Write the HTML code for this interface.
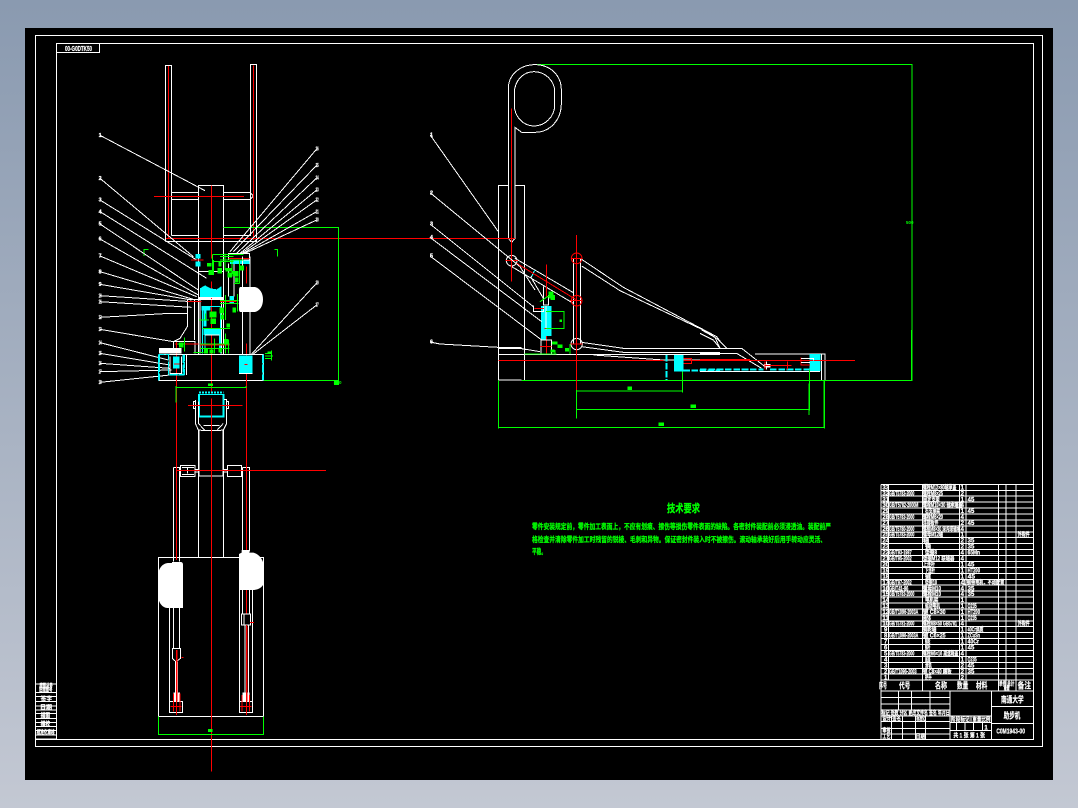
<!DOCTYPE html>
<html><head><meta charset="utf-8"><title>CAD</title>
<style>
html,body{margin:0;padding:0;width:1078px;height:808px;overflow:hidden;background:linear-gradient(180deg,#8a9ab0 0%,#c3c8d3 100%)}
svg{position:absolute;left:0;top:0}
text{font-family:"Liberation Sans","Noto Sans CJK SC",sans-serif;font-weight:bold}
.w{fill:none;stroke:#fff;stroke-width:3}
.r{fill:none;stroke:#f00;stroke-width:3}
.g{fill:none;stroke:#0f0;stroke-width:3}
.c{fill:none;stroke:#0ff;stroke-width:3}
.wt{fill:#fff;stroke:#fff;stroke-width:.7;font-size:18px}
.gt{fill:#0f0;stroke:none;font-size:15px}
.nt{fill:#fff;stroke:#fff;stroke-width:.8;font-size:16px}
.tech{fill:#0f0;stroke:#0f0;stroke-width:.25;font-size:7.5px}
</style></head><body>
<svg width="1078" height="808" viewBox="0 0 1078 808" shape-rendering="crispEdges">
<rect x="25" y="28" width="1028" height="752" fill="#000"/>
<g fill="none" stroke="#fff">
<rect x="35.5" y="35.5" width="1007" height="711"/>
<path d="M56.500 739V43.500H1033.500V739.500H35.500"/>
<path d="M56.500 52.500H99.500V43"/>
</g>
<text x="65" y="51" font-size="7" fill="#fff" stroke="#fff" stroke-width=".2" textLength="27" lengthAdjust="spacingAndGlyphs">00-G0DTK50</text>

<!-- LEFT VIEW TOP -->
<g transform="translate(90,40) scale(.33333)">
<path class="w" d="M226 604V76H245V586M481 586V73H500V604H226M245 458H325M400 458H481L490 468L481 478H400M245 478H325M245 478V586M245 586H325M400 586H481V478"/>
<path class="w" d="M325 695V436H400V695M325 695H400V775H325ZM325 775V945M415 670V770M432 670V770M400 775V945"/>
<path class="r" d="M236 78V595M490 76V600M192 469H462M364 436V655M364 725V1060M228 595H1270"/>
<path class="g" d="M400 562H745V1022H522M162 648V629H176M563 650V629H553M522 1021H745"/>
<rect x="732" y="1022" width="15" height="13" fill="#0f0"/>
<text class="gt" x="731" y="1034">50</text>

<!-- leaders -->
<path class="w" d="M30 286L345 452M30 415L310 650M30 480L320 660M30 515L350 715M30 552L325 750M30 597L325 765M30 648L320 770M30 695L310 778M30 733L305 780M30 767L305 785M30 785L108 790L305 802M30 832L240 820H292M30 868L250 905M30 908L235 960M30 940L240 975M30 970L240 985M30 995L245 990M30 1027L240 1005"/>
<path class="w" d="M680 327L420 635M680 376L430 635M680 414L440 640M680 450L450 640M680 480L455 640M680 515L460 640M680 540L465 640M680 729L485 942M680 795L490 942"/>
<g>
<text class="nt" x="26" y="291">1</text><text class="nt" x="26" y="420">2</text><text class="nt" x="26" y="485">3</text><text class="nt" x="26" y="520">4</text><text class="nt" x="26" y="557">5</text><text class="nt" x="26" y="602">6</text><text class="nt" x="26" y="653">7</text><text class="nt" x="26" y="700">8</text><text class="nt" x="26" y="738">9</text><text class="nt" x="26" y="772" textLength="9" lengthAdjust="spacingAndGlyphs">10</text><text class="nt" x="26" y="790" textLength="9" lengthAdjust="spacingAndGlyphs">11</text><text class="nt" x="26" y="837" textLength="9" lengthAdjust="spacingAndGlyphs">12</text><text class="nt" x="26" y="873" textLength="9" lengthAdjust="spacingAndGlyphs">13</text><text class="nt" x="26" y="913" textLength="9" lengthAdjust="spacingAndGlyphs">14</text><text class="nt" x="26" y="945" textLength="9" lengthAdjust="spacingAndGlyphs">15</text><text class="nt" x="26" y="975" textLength="9" lengthAdjust="spacingAndGlyphs">16</text><text class="nt" x="26" y="1000" textLength="9" lengthAdjust="spacingAndGlyphs">17</text><text class="nt" x="26" y="1032" textLength="9" lengthAdjust="spacingAndGlyphs">18</text>
<text class="nt" x="677" y="332" textLength="9" lengthAdjust="spacingAndGlyphs">26</text><text class="nt" x="677" y="381" textLength="9" lengthAdjust="spacingAndGlyphs">25</text><text class="nt" x="677" y="419" textLength="9" lengthAdjust="spacingAndGlyphs">24</text><text class="nt" x="677" y="455" textLength="9" lengthAdjust="spacingAndGlyphs">23</text><text class="nt" x="677" y="485" textLength="9" lengthAdjust="spacingAndGlyphs">22</text><text class="nt" x="677" y="520" textLength="9" lengthAdjust="spacingAndGlyphs">21</text><text class="nt" x="677" y="545" textLength="9" lengthAdjust="spacingAndGlyphs">20</text><text class="nt" x="677" y="734" textLength="9" lengthAdjust="spacingAndGlyphs">19</text><text class="nt" x="677" y="800" textLength="9" lengthAdjust="spacingAndGlyphs">27</text>
</g>

<!-- center machine -->
<path d="M330 772V745L345 736L362 745L380 748L395 738V772Z" fill="#0ff"/>
<path class="w" d="M325 772H400M308 660H338M326 778H400M415 640H478V660H415Z"/>
<path d="M316 642H331V656H316ZM316 664H331V680H316ZM420 662H478V672H420ZM418 768H432V792H418Z" fill="#0ff"/>
<path class="r" d="M303 660H340M415 655H478M469 680V730M469 910V1080M260 905V1080"/>
<path class="w" d="M458 650V942M480 650V942M292 778V860L270 895L250 905V940M313 778V900M292 778H325M250 905H315V940"/>
<path d="M452 741H495C510 745 519 760 519 778C519 798 510 812 495 816H452C448 816 447 812 447 805V752C447 745 448 741 452 741Z" fill="#fff" shape-rendering="auto"/>
<path class="c" d="M337 800H392M337 800V940M392 800V940M345 870H388M345 885V930M388 885V930"/>
<path d="M340 867H390V885H340ZM335 798H362V812H335ZM340 812H350V860H340Z" fill="#0ff"/>
<path class="w" d="M330 775V940M395 775V940M345 885H388"/>
<path class="r" d="M330 915H418M255 912H325M292 785H335M390 785H440"/>
<path class="g" d="M368 643V705M368 643H460M390 650H430M390 660H460M368 664H430M426 660V702M448 660V730M432 730H448M405 640V690M370 660V705M406 765V840M390 782H445M390 790H445M443 762V815M347 820V840M327 840H357M338 865H420M373 896V940M406 880V940M330 925H418M330 912H418M415 900V940M283 892V935M263 912H283M545 932V962M525 940H545M525 948H549M525 955H545M310 938H340"/>
<path d="M351 669H365V680H351ZM356 690H366V705H356ZM382 684H396V700H382ZM407 684H425V695H407ZM413 697H426V712H413ZM428 693H446V710H428ZM447 676H462V692H447ZM435 712H445V728H435ZM385 664H394V680H385ZM388 803H402V820H388ZM358 815H380V832H358ZM362 836H378V852H362ZM392 824H402V838H392ZM428 803H438V818H428ZM410 850H420V862H410ZM402 897H416V910H402ZM267 908H280V922H267ZM342 927H354V940H342ZM358 928H370V940H358ZM385 927H396V938H385ZM355 1030H369V1038H355ZM532 934H544V940H532Z" fill="#0f0"/>

<!-- base -->
<rect x="207" y="924" width="68" height="16" fill="#fff"/>
<path class="w" d="M205 1021H520M520 943V1021M205 943H520"/>
<path class="c" d="M205 943V1021M206 944H238M235 944V1005H282V944M284 945V1005M519 944V1021" stroke-dasharray="18 3"/>
<path class="c" style="stroke-width:6" d="M207 943V1020M281 945V1005M519 945V1020M238 1004H282" stroke-dasharray="24 5"/>
<path d="M447 947H488V1001H447ZM249 950H268V985H249Z" fill="#0ff"/>
<path class="w" d="M240 950V1000H275V950M447 1001H488"/>
<path class="r" d="M464 973H472M252 972H268"/>
<path class="w" d="M290 943V1005"/>
<path class="g" d="M260 1043H470M260 1043V1082M470 1043V1048"/>
</g>

<!-- LEFT VIEW BOTTOM -->
<g transform="translate(140,380) scale(.33333)">
<path class="c" style="stroke-width:6" d="M177 42V110H250V42"/>
<path class="c" d="M177 38H250" stroke-dasharray="6 3" style="stroke-width:6"/>
<path class="c" d="M177 44H250"/>
<path class="w" d="M160 65H166V85H160ZM260 65H266V85H260ZM166 60V130L175 150L195 152H230L250 150L260 130V58H252M175 65V130L195 152M250 130L230 152M190 136H238"/>
<path class="w" style="stroke-width:4" d="M176 150V288M250 150V288"/>
<path class="w" d="M176 288H250V532M176 288V532M100 262H118V545M100 262V545M307 262H329V515M307 262V515M55 532H370V1010H55ZM122 256H165V290H122ZM262 256H305V290H262ZM126 262H162M126 284H162M142 262V280M165 268H178M248 268H262M165 276H178M248 276H262"/>
<path d="M96 546H122C126 546 129 549 129 553V684H82C68 684 55 668 55 650V585C55 565 68 550 84 549H96ZM305 510H328V518H340C358 522 372 540 372 565V605C372 618 358 630 340 630H297V522L305 518Z" fill="#fff" shape-rendering="auto"/>
<path class="w" d="M88 684V965M118 684V805M298 630V965M338 630V965M307 630V700M328 630V700M100 684V805M97 805H122V835L108 845L97 835ZM305 702H332V735H305ZM312 702V735M106 845V965M113 845V965M315 735V965M325 735V965"/>
<path class="w" d="M88 965H128V997H88ZM298 965H338V997H298Z"/>
<path d="M100 937H120V964H100ZM308 937H328V964H308Z" fill="#fff"/>
<path class="r" d="M109 0V540M109 840V1005M319 0V510M319 630V700M320 735V1005M214 55V1175M144 76H308M108 271H558M92 980H125M300 980H335M125 833H130M330 727H342"/>
<path class="r" style="stroke-width:5" d="M110 810V965M320 740V965"/>
<path class="r" d="M100 940V995M120 940V995M306 945V995M328 945V995"/>
<path class="g" d="M108 22H318M108 18V68M318 18V24M55 1010V1063H370V1010"/>
<rect x="204" y="10" width="14" height="8" fill="#0f0"/>
<rect x="204" y="1047" width="14" height="9" fill="#0f0"/>
</g>

<!-- RIGHT VIEW -->
<g transform="translate(420,50) scale(.33333)">
<path class="g" d="M345 44H1476V991H305M235 991V1135M235 1132H1212V990M470 1023H787M787 960V1028M470 1078H1167V1095M469 1020V1105M1167 1090V1000"/>
<path class="w" d="M265 565V115C265 75 300 44 345 44C390 44 424 75 424 120V160C424 210 390 247 345 247H305L285 232V565L275 577L265 565Z"/>
<path class="w" d="M283 130C283 92 310 65 342 65C375 65 404 92 404 125V165C404 200 375 228 342 228C310 228 283 200 283 165Z"/>
<path class="w" d="M235 990V406H265M285 406H313V990M235 990H305"/>
<path class="w" d="M285 625L460 728M272 648L460 760M345 660L333 682L370 745"/>
<path class="c" d="M345 660L335 680"/>
<circle class="w" cx="275" cy="632" r="16" shape-rendering="auto"/>
<path class="w" d="M460 625V880M482 625V880"/>
<circle class="w" cx="470" cy="625" r="16" style="stroke:#f00" shape-rendering="auto"/>
<circle class="w" cx="470" cy="752" r="16" style="stroke:#f00" shape-rendering="auto"/>
<circle class="w" cx="470" cy="882" r="17" shape-rendering="auto"/>
<path class="w" d="M485 628L610 712L890 860L905 880M485 648L600 722L860 845L885 862L900 895"/>
<path class="w" d="M485 877L610 895H900M485 890L610 907H900M235 896H305L360 905M235 913H900M520 915L730 930H900"/>
<path class="r" d="M274 175V695M0 565H285M256 632H294M290 640L470 750M469 555V1020M379 643V740M379 855V910M235 931H730M770 931H900M450 752H488M455 625H485M452 882H488"/>
<path d="M363 768H395V858H378V870H363Z" fill="#0ff"/>
<path class="w" d="M370 710V765H385V735M378 768V838M340 766V784H370V770M363 870H395V910M363 910V870"/>
<path class="r" d="M343 775H372M360 889H395M373 835H395"/>
<path class="g" d="M378 784H432V835H378M313 912H410M450 882V912M360 755L390 735M405 900V912"/>
<path d="M385 725H400V735H405V750H392V745H385ZM418 808H426V816H418ZM396 874H412V884H396ZM412 884H428V894H412ZM435 894H447V904H435ZM392 898H404V908H392ZM622 1009H636V1020H622ZM811 1064H828V1074H811ZM715 1118H732V1128H715Z" fill="#0f0"/>
<path d="M762 915H790V965H762Z" fill="#0ff"/>
<path class="c" style="stroke-width:6" d="M739 915V990" stroke-dasharray="20 4"/>
<path class="c" style="stroke-width:6" d="M790 962H900" stroke-dasharray="20 4"/>
<path class="r" d="M790 925H815V940H790"/>
<path class="w" d="M30 254L235 545M30 428L300 650L345 720M30 522L340 770M30 562L365 815M30 618L365 870M30 876L60 882L235 892H305"/>
<text class="nt" x="30" y="259">1</text><text class="nt" x="30" y="433">2</text><text class="nt" x="30" y="527">3</text><text class="nt" x="30" y="567">4</text><text class="nt" x="30" y="623">5</text><text class="nt" x="30" y="881">6</text>
</g>
<g transform="translate(700,330) scale(.33333)">
<path class="w" d="M0 55H125L195 110M0 70H110L185 115M165 72H375V150M365 72V150M30 70H85M200 95V118M0 124H360"/>
<path class="w" d="M5 0L50 25L80 55M0 10L40 30L60 55"/>
<path d="M328 72H362V123H328Z" fill="#0ff"/>
<path class="c" style="stroke-width:6" d="M0 119H190M210 119H328" stroke-dasharray="20 5"/>
<path d="M192 102H212V112H192Z" fill="#fff"/>
<path class="r" d="M0 91H465M0 88H150M195 95V118M262 95V118M195 106H275M303 82V105H330"/>
<path class="w" d="M303 85H340V92M303 98H330"/>
<path class="g" d="M328 118V242M0 238H328M0 292H373M373 150V296M0 151H637M634 0V151"/>
</g>
<text x="906" y="224" font-size="4.500" fill="#0f0">500</text>
<text x="334" y="384" font-size="4.500" fill="#0f0">350</text>

<!-- TECH REQUIREMENTS -->
<text x="667" y="512" font-size="11" fill="#0f0" stroke="#0f0" stroke-width=".3" textLength="33" lengthAdjust="spacingAndGlyphs">技术要求</text>
<text class="tech" x="532" y="529" textLength="299" lengthAdjust="spacingAndGlyphs">零件安装规定前，零件加工表面上，不应有划痕、擦伤等损伤零件表面的缺陷。各密封件装配前必须浸透油。装配前严</text>
<text class="tech" x="532" y="542" textLength="294" lengthAdjust="spacingAndGlyphs">格检查并清除零件加工时残留的锐棱、毛刺和异物。保证密封件装入时不被擦伤。滚动轴承装好后用手转动应灵活、</text>
<text class="tech" x="532" y="554" textLength="14" lengthAdjust="spacingAndGlyphs">平稳。</text>

<!-- LEFT STRIP -->
<g transform="translate(20,670) scale(.33333)">
<path class="w" d="M45 42H108M45 68H108M45 80H108M45 95H108M45 108H108M45 120H108M45 130H108M45 145H108M45 157H108M45 170H108M45 182H108M45 195H108M45 207H108"/>
<text class="wt" x="58" y="54" textLength="40" lengthAdjust="spacingAndGlyphs">底图总号</text>
<text class="wt" x="57" y="66" textLength="40" lengthAdjust="spacingAndGlyphs">旧底图号</text>
<text class="wt" x="62" y="93" textLength="34" lengthAdjust="spacingAndGlyphs">签字</text>
<text class="wt" x="60" y="118" textLength="36" lengthAdjust="spacingAndGlyphs">日期</text>
<text class="wt" x="62" y="143" textLength="28" lengthAdjust="spacingAndGlyphs">描图</text>
<text class="wt" x="62" y="168" textLength="28" lengthAdjust="spacingAndGlyphs">描校</text>
<text class="wt" x="50" y="193" textLength="54" lengthAdjust="spacingAndGlyphs">标准化审核</text>
</g>

<!-- TITLE TABLE -->
<g transform="translate(875,480) scale(.33333)">
<path class="w" d="M18 13H475M18 30.800H475M18 48.600H475M18 66.400H475M18 84.200H475M18 102H475M18 119.800H475M18 137.600H475M18 155.400H475M18 173.200H475M18 191H475M18 208.800H475M18 226.600H475M18 244.400H475M18 262.200H475M18 280H475M18 297.800H475M18 315.600H475M18 333.400H475M18 351.200H475M18 369H475M18 386.800H475M18 404.600H475M18 422.400H475M18 440.200H475M18 458H475M18 475.800H475M18 493.600H475M18 511.400H475M18 529.200H475M18 547H475M18 564.800H475M18 582.600H475M18 600H475"/>
<path class="w" d="M18 13V778H475V13M40 13V600M142 13V633M253 13V600M273 13V600M370 13V633M393 13V633M423 13V633M18 633H475M225 633V778M350 633V778M350 680H475M350 730H475M18 652H225M18 672H225M18 690H225M18 708H225M18 725H225M18 745H225M18 762H225M70 633V690M110 633V690M165 633V690M50 708V778M82 708V778M122 708V778M152 708V778M225 708H350M225 728H350M225 752H350M245 728V752M270 728V752M295 728V752M322 728V752M288 708V728"/>
<g class="wt">
<text x="22" y="28">33</text><text x="22" y="46">32</text><text x="22" y="64">31</text><text x="22" y="81">30</text><text x="22" y="99">29</text><text x="22" y="117">28</text><text x="22" y="135">27</text><text x="22" y="153">26</text><text x="22" y="170">25</text><text x="22" y="188">24</text><text x="22" y="206">23</text><text x="22" y="224">22</text><text x="22" y="242">21</text><text x="22" y="259">20</text><text x="22" y="277">19</text><text x="22" y="295">18</text><text x="22" y="313">17</text><text x="22" y="331">16</text><text x="22" y="348">15</text><text x="22" y="366">14</text><text x="22" y="384">13</text><text x="22" y="402">12</text><text x="22" y="420">11</text><text x="22" y="437">10</text><text x="27" y="455">9</text><text x="27" y="473">8</text><text x="27" y="491">7</text><text x="27" y="509">6</text><text x="27" y="526">5</text><text x="27" y="544">4</text><text x="27" y="562">3</text><text x="27" y="580">2</text><text x="27" y="598">1</text>
</g>
<g class="wt">
<text x="42" y="46" textLength="76" lengthAdjust="spacingAndGlyphs">GB/T5783-2000</text>
<text x="42" y="81" textLength="88" lengthAdjust="spacingAndGlyphs">GB/T5782-2000M</text>
<text x="42" y="117" textLength="76" lengthAdjust="spacingAndGlyphs">GB/T5783-2000</text>
<text x="42" y="153" textLength="76" lengthAdjust="spacingAndGlyphs">GB/T5780-2000</text>
<text x="42" y="170" textLength="76" lengthAdjust="spacingAndGlyphs">GB/T5783-2000</text>
<text x="42" y="224" textLength="68" lengthAdjust="spacingAndGlyphs">GB/T93-1987</text>
<text x="42" y="242" textLength="68" lengthAdjust="spacingAndGlyphs">GB/T95-2002</text>
<text x="42" y="313" textLength="68" lengthAdjust="spacingAndGlyphs">GB/T97-2002</text>
<text x="42" y="331" textLength="58" lengthAdjust="spacingAndGlyphs">GB/T41-86</text>
<text x="42" y="348" textLength="76" lengthAdjust="spacingAndGlyphs">GB/T5783-2000</text>
<text x="42" y="402" textLength="88" lengthAdjust="spacingAndGlyphs">GB/T1096-2003A</text>
<text x="42" y="437" textLength="76" lengthAdjust="spacingAndGlyphs">GB/T5781-2000</text>
<text x="42" y="473" textLength="88" lengthAdjust="spacingAndGlyphs">GB/T1096-2003A</text>
<text x="42" y="526" textLength="76" lengthAdjust="spacingAndGlyphs">GB/T5783-2000</text>
<text x="42" y="580" textLength="83" lengthAdjust="spacingAndGlyphs">GB/T1096-2003</text>
</g>
<g class="wt">
<text x="144" y="28" textLength="100" lengthAdjust="spacingAndGlyphs">螺栓M12×80轴承盖</text>
<text x="144" y="46" textLength="60" lengthAdjust="spacingAndGlyphs">螺栓M8×25</text>
<text x="144" y="64" textLength="50" lengthAdjust="spacingAndGlyphs">固定支架</text>
<text x="144" y="81" textLength="118" lengthAdjust="spacingAndGlyphs">螺栓M10×30 轴承端盖</text>
<text x="150" y="99" textLength="45" lengthAdjust="spacingAndGlyphs">右支撑架</text>
<text x="144" y="117" textLength="60" lengthAdjust="spacingAndGlyphs">螺栓M6×20</text>
<text x="144" y="135" textLength="46" lengthAdjust="spacingAndGlyphs">连接板件</text>
<text x="144" y="153" textLength="112" lengthAdjust="spacingAndGlyphs">螺栓M8×30 深沟球轴承</text>
<text x="144" y="170" textLength="60" lengthAdjust="spacingAndGlyphs">螺母M12轴</text>
<text x="144" y="188" textLength="12">轴</text>
<text x="150" y="206" textLength="6">销</text>
<text x="150" y="224" textLength="36" lengthAdjust="spacingAndGlyphs">垫圈8</text>
<text x="144" y="242" textLength="94" lengthAdjust="spacingAndGlyphs">垫圈M12 联轴器</text>
<text x="144" y="259" textLength="36" lengthAdjust="spacingAndGlyphs">上连杆</text>
<text x="150" y="277" textLength="30" lengthAdjust="spacingAndGlyphs">下连杆</text>
<text x="150" y="295" textLength="12">键</text>
<text x="150" y="313" textLength="36" lengthAdjust="spacingAndGlyphs">垫圈10</text>
<text x="144" y="331" textLength="54" lengthAdjust="spacingAndGlyphs">螺母M10</text>
<text x="144" y="348" textLength="54" lengthAdjust="spacingAndGlyphs">螺栓M10</text>
<text x="150" y="366" textLength="40" lengthAdjust="spacingAndGlyphs">电机架</text>
<text x="150" y="384" textLength="45" lengthAdjust="spacingAndGlyphs">驱动电机</text>
<text x="144" y="402" textLength="68" lengthAdjust="spacingAndGlyphs">键 C8×30</text>
<text x="144" y="420" textLength="24" lengthAdjust="spacingAndGlyphs">箱体</text>
<text x="144" y="437" textLength="102" lengthAdjust="spacingAndGlyphs">螺栓M8×50 GB5781</text>
<text x="144" y="455" textLength="40" lengthAdjust="spacingAndGlyphs">蜗轮轴</text>
<text x="144" y="473" textLength="68" lengthAdjust="spacingAndGlyphs">键 C6×25</text>
<text x="150" y="491" textLength="16" lengthAdjust="spacingAndGlyphs">蜗轮</text>
<text x="150" y="509" textLength="16" lengthAdjust="spacingAndGlyphs">蜗杆</text>
<text x="144" y="526" textLength="106" lengthAdjust="spacingAndGlyphs">螺栓M6×16 减速箱盖</text>
<text x="150" y="544" textLength="16" lengthAdjust="spacingAndGlyphs">底座</text>
<text x="150" y="562" textLength="20" lengthAdjust="spacingAndGlyphs">滑轨</text>
<text x="144" y="580" textLength="86" lengthAdjust="spacingAndGlyphs">键 C8×40 踏板</text>
<text x="150" y="598" textLength="20" lengthAdjust="spacingAndGlyphs">把手</text>
</g>
<g class="wt">
<text x="257" y="28">1</text><text x="257" y="46">2</text><text x="257" y="64">1</text><text x="257" y="81">4</text><text x="257" y="99">1</text><text x="257" y="117">4</text><text x="257" y="135">2</text><text x="257" y="153">4</text><text x="257" y="170">1</text><text x="257" y="188">2</text><text x="257" y="206">2</text><text x="257" y="224">4</text><text x="257" y="242">4</text><text x="257" y="259">1</text><text x="257" y="277">1</text><text x="257" y="295">1</text><text x="257" y="313">4</text><text x="257" y="331">4</text><text x="257" y="348">4</text><text x="257" y="366">1</text><text x="257" y="384">1</text><text x="257" y="402">1</text><text x="257" y="420">1</text><text x="257" y="437">4</text><text x="257" y="455">1</text><text x="257" y="473">1</text><text x="257" y="491">1</text><text x="257" y="509">1</text><text x="257" y="526">4</text><text x="257" y="544">1</text><text x="257" y="562">2</text><text x="257" y="580">2</text><text x="257" y="598">2</text>
<text x="278" y="64">45</text><text x="278" y="99">45</text><text x="278" y="135">45</text><text x="278" y="188">35</text><text x="278" y="206">35</text><text x="278" y="224" textLength="37" lengthAdjust="spacingAndGlyphs">65Mn</text><text x="278" y="259">45</text><text x="278" y="277" textLength="37" lengthAdjust="spacingAndGlyphs">HT200</text><text x="278" y="295" textLength="22" lengthAdjust="spacingAndGlyphs">45</text><text x="265" y="313" textLength="123" lengthAdjust="spacingAndGlyphs">1 钢带电机，不动配置</text><text x="278" y="331">35</text><text x="278" y="348">35</text><text x="278" y="384" textLength="27" lengthAdjust="spacingAndGlyphs">Q235</text><text x="278" y="402" textLength="37" lengthAdjust="spacingAndGlyphs">HT200</text><text x="278" y="420" textLength="27" lengthAdjust="spacingAndGlyphs">Q235</text><text x="278" y="455" textLength="47" lengthAdjust="spacingAndGlyphs">40Cr调质</text><text x="278" y="473" textLength="37" lengthAdjust="spacingAndGlyphs">ZCuSn</text><text x="278" y="491" textLength="34" lengthAdjust="spacingAndGlyphs">40Cr</text><text x="278" y="509">45</text><text x="278" y="544" textLength="27" lengthAdjust="spacingAndGlyphs">Q235</text><text x="278" y="562">45</text><text x="278" y="580">35</text>
<text x="428" y="170" textLength="36" lengthAdjust="spacingAndGlyphs">外购件</text><text x="428" y="437" textLength="36" lengthAdjust="spacingAndGlyphs">外购件</text>
</g>
<g class="wt" style="font-size:25px">
<text x="12" y="626" textLength="24" lengthAdjust="spacingAndGlyphs">序号</text>
<text x="72" y="626" textLength="34" lengthAdjust="spacingAndGlyphs">代号</text>
<text x="180" y="626" textLength="36" lengthAdjust="spacingAndGlyphs">名称</text>
<text x="246" y="626" textLength="34" lengthAdjust="spacingAndGlyphs">数量</text>
<text x="303" y="626" textLength="34" lengthAdjust="spacingAndGlyphs">材料</text>
<text x="428" y="626" textLength="40" lengthAdjust="spacingAndGlyphs">备注</text>
</g>
<text class="wt" x="372" y="618" textLength="46" lengthAdjust="spacingAndGlyphs">单件 总计</text>
<text class="wt" x="386" y="632" textLength="18" lengthAdjust="spacingAndGlyphs">重量</text>
<text class="wt" x="20" y="705" textLength="204" lengthAdjust="spacingAndGlyphs">标记 处数 分区 更改文件名 签名 年月日</text>
<text class="wt" x="22" y="722" textLength="56" lengthAdjust="spacingAndGlyphs">设计 签名</text>
<text class="wt" x="124" y="722" textLength="26" lengthAdjust="spacingAndGlyphs">标准化</text>
<text class="wt" x="22" y="758" textLength="24" lengthAdjust="spacingAndGlyphs">审核</text>
<text class="wt" x="22" y="775" textLength="24" lengthAdjust="spacingAndGlyphs">工艺</text>
<text class="wt" x="122" y="775" textLength="28" lengthAdjust="spacingAndGlyphs">日期</text>
<text class="wt" x="228" y="724" textLength="56" lengthAdjust="spacingAndGlyphs">阶段标记</text>
<text class="wt" x="292" y="724" textLength="54" lengthAdjust="spacingAndGlyphs">重量比例</text>
<text class="wt" x="328" y="749" textLength="14">1</text>
<text class="wt" x="235" y="772" textLength="95" lengthAdjust="spacingAndGlyphs">共 1 张  第 1 张</text>
<text class="wt" style="font-size:26px" x="378" y="668" textLength="68" lengthAdjust="spacingAndGlyphs">南通大学</text>
<text class="wt" style="font-size:26px" x="386" y="716" textLength="50" lengthAdjust="spacingAndGlyphs">助步机</text>
<text class="wt" style="font-size:22px" x="364" y="760" textLength="86" lengthAdjust="spacingAndGlyphs">C0M1943-00</text>
</g>
</svg>
</body></html>
